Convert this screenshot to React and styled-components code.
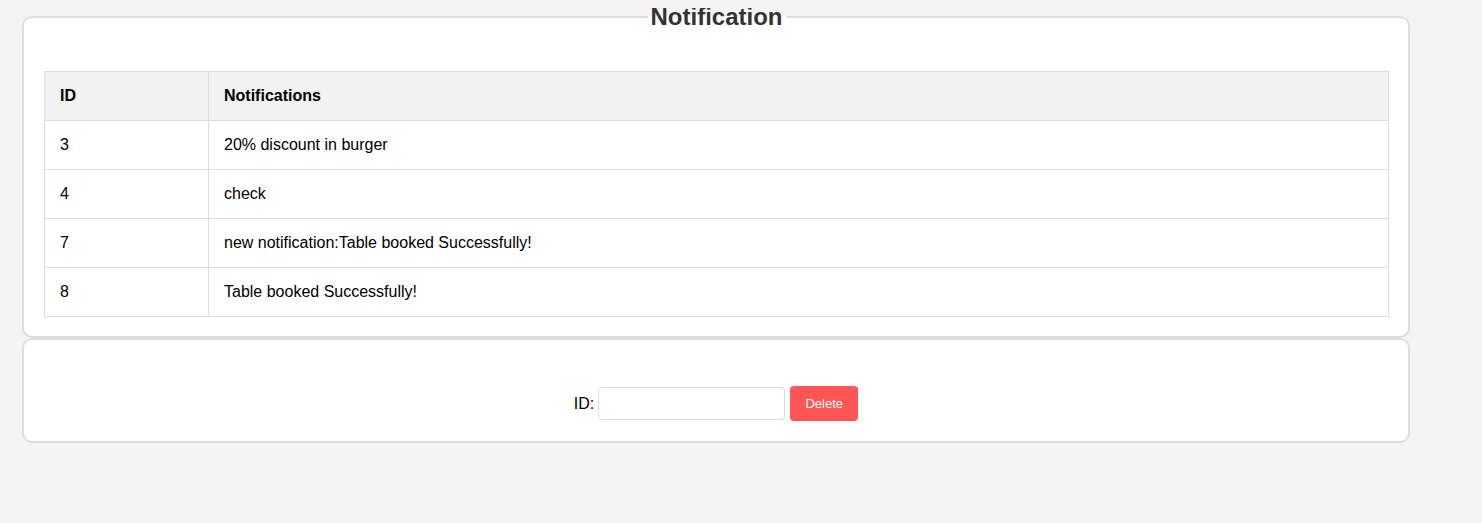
import React, { useState } from 'react'
import styled, { createGlobalStyle } from 'styled-components'

const GlobalStyle = createGlobalStyle`
    body{
        margin: 8px;
        background: #f4f4f4;
        font-family: "Liberation Sans", Arial, sans-serif;
        color: #000;
    }
`;

const notifications = [
    { id: 3, text: '20% discount in burger' },
    { id: 4, text: 'check' },
    { id: 7, text: 'new notification:Table booked Successfully!' },
    { id: 8, text: 'Table booked Successfully!' },
]

function App() {
    const [id, setId] = useState('')

    return (
        <Page>
            <GlobalStyle />
            <Card>
                <Title>Notification</Title>
                <Table>
                    <thead>
                        <tr>
                            <Th $w="133px">ID</Th>
                            <Th>Notifications</Th>
                        </tr>
                    </thead>
                    <tbody>
                        {notifications.map(n => (
                            <tr key={n.id}>
                                <Td>{n.id}</Td>
                                <Td>{n.text}</Td>
                            </tr>
                        ))}
                    </tbody>
                </Table>
            </Card>
            <Panel>
                <DeleteForm onSubmit={e => e.preventDefault()}>
                    <Label htmlFor="id">ID:</Label>
                    <Input id="id" type="text" value={id} onChange={e => setId(e.target.value)} />
                    <DeleteButton type="submit">Delete</DeleteButton>
                </DeleteForm>
            </Panel>
        </Page>
    )
}

const Page = styled.div`
    padding-left: 14px;
    width: 1388px;
`;

const Card = styled.fieldset`
    margin: 0;
    padding: 20px 19px 19px 20px;
    border: 2px solid #ddd;
    border-radius: 10px;
    background: #fff;
    min-width: 0;
`;

const Title = styled.legend`
    margin: 0 auto;
    padding: 0 3px;
    font-size: 24px;
    line-height: 17px;
    font-weight: bold;
    color: #333;
`;

const Table = styled.table`
    width: 100%;
    border-collapse: collapse;
    margin-top: 26px;
    font-size: 16px;
`;

const Th = styled.th`
    width: ${p => p.$w || 'auto'};
    text-align: left;
    padding: 15px;
    background: #f2f2f2;
    border: 1px solid #ddd;
    font-weight: bold;
    line-height: 18px;
`;

const Td = styled.td`
    padding: 15px;
    border: 1px solid #ddd;
    line-height: 18px;
`;

const Panel = styled.div`
    border: 2px solid #ddd;
    border-radius: 10px;
    background: #fff;
    padding: 46px 20px 20px;
`;

const DeleteForm = styled.form`
    display: flex;
    justify-content: center;
    align-items: center;
`;

const Label = styled.label`
    font-size: 16px;
    margin-right: 4px;
`;

const Input = styled.input`
    width: 187px;
    height: 33px;
    box-sizing: border-box;
    border: 1px solid #ddd;
    border-radius: 4px;
    padding: 0 8px;
    font-family: inherit;
    font-size: 14px;
    outline: none;
`;

const DeleteButton = styled.button`
    margin-left: 5px;
    width: 68px;
    height: 35px;
    border: none;
    border-radius: 4px;
    background: #ff5555;
    color: #fff;
    font-family: inherit;
    font-size: 13px;
    cursor: pointer;
`;

export default App
